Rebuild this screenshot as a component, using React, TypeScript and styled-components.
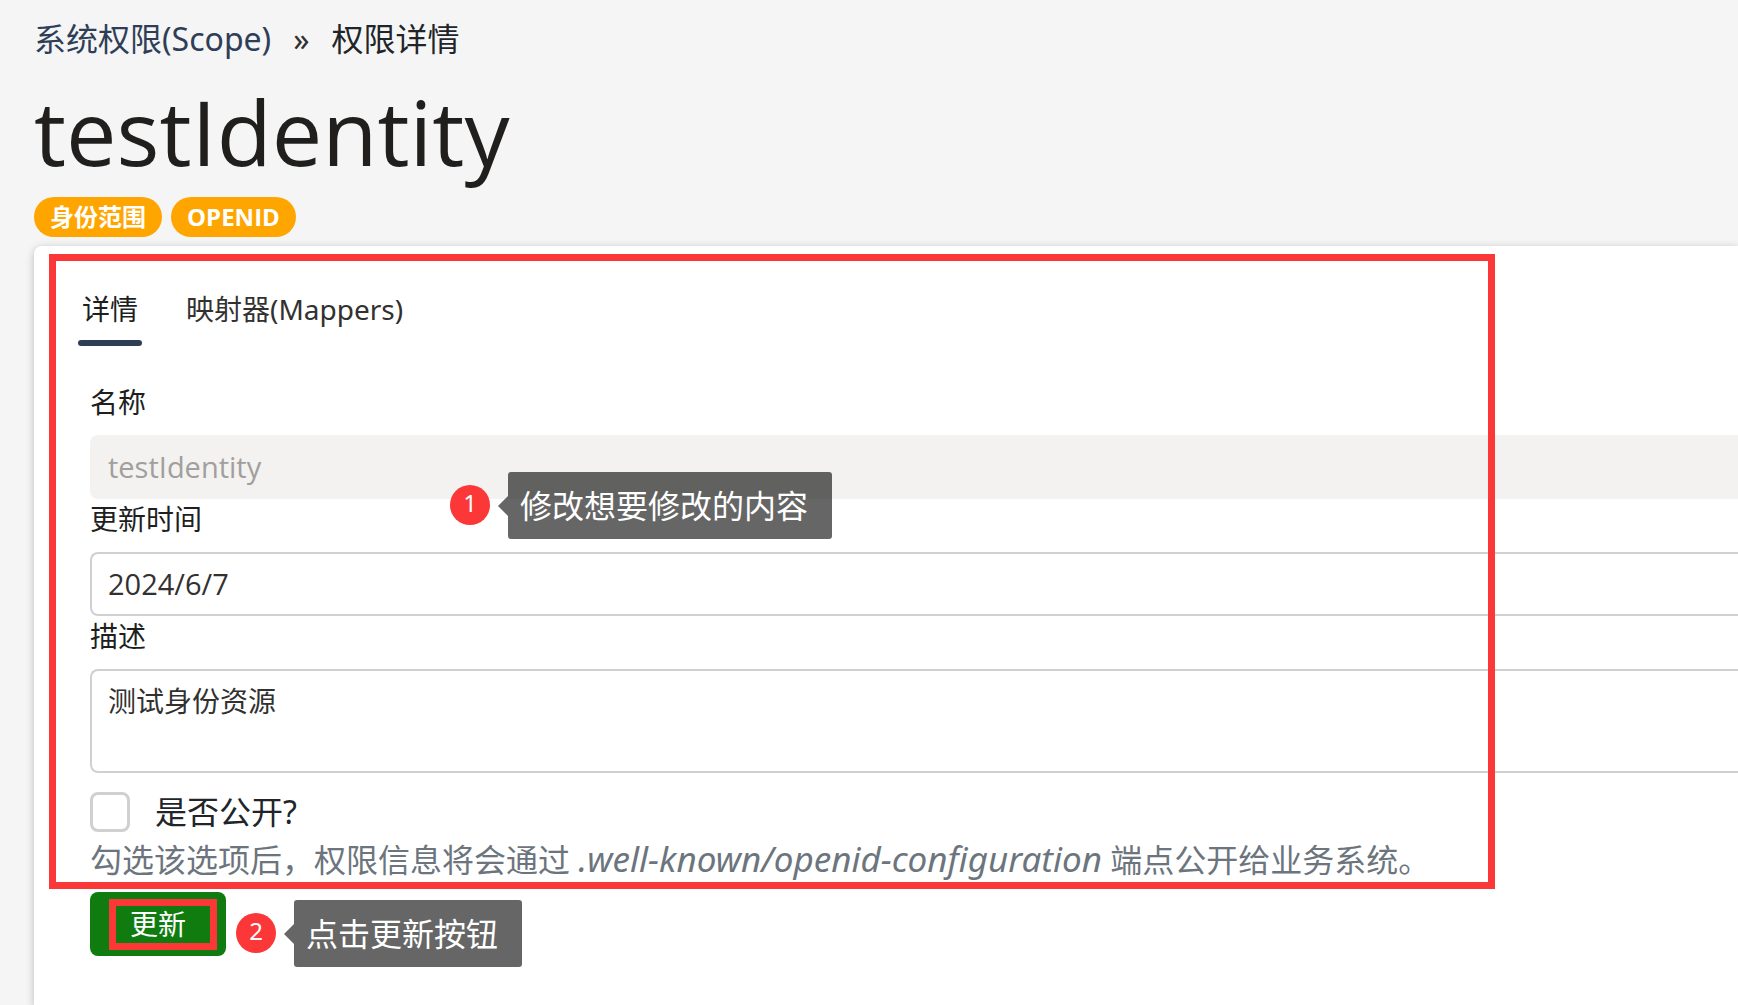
import React, { useState } from "react";
import styled, { createGlobalStyle } from "styled-components";

const GlobalStyle = createGlobalStyle`
  *, *::before, *::after { box-sizing: border-box; }
  body {
    margin: 0;
    background: #f5f5f5;
    color: #212529;
    font-family: "Noto Sans", "Noto Sans CJK SC", sans-serif;
    font-size: 32px;
    line-height: 48px;
  }
  button, input, textarea { font-family: inherit; }
`;

const displayFont = `"Open Sans", "Noto Sans CJK SC", sans-serif`;

const Page = styled.div`
  display: flex;
  flex-direction: column;
  min-height: 100vh;
  padding: 15px 0 0 34px;
  overflow: hidden;
`;

const Breadcrumb = styled.nav`
  display: flex;
  gap: 22px;
`;

const CrumbLink = styled.a`
  color: #2f3e57;
  text-decoration: none;
`;

const Separator = styled.span`
  color: #323130;
`;

const Title = styled.h1`
  margin: 8px 0 0;
  color: #201f1e;
  font-family: ${displayFont};
  font-size: 90px;
  font-weight: 400;
  line-height: 120px;
`;

const Badges = styled.div`
  display: flex;
  gap: 9px;
  margin: 6px 0 9px;
`;

const Badge = styled.span`
  padding: 0 16px;
  border-radius: 20px;
  background: #ffa500;
  color: #fff;
  font-family: ${displayFont};
  font-size: 24px;
  font-weight: 700;
  line-height: 40px;
`;

const Card = styled.main`
  position: relative;
  flex: 1;
  padding: 36px 0 48px 44px;
  border-radius: 8px 0 0 0;
  background: #fff;
  box-shadow: 0 2px 8px rgba(0, 0, 0, 0.24);
`;

const Tabs = styled.div`
  display: flex;
  gap: 40px;
`;

const Tab = styled.button<{ $active: boolean }>`
  display: flex;
  flex-direction: column;
  padding: 6px 0 0;
  border: 0;
  background: none;
  color: ${(p) => (p.$active ? "#201f1e" : "#323130")};
  font-size: 28px;
  line-height: 42px;
  cursor: pointer;

  span {
    padding: 0 4px 10px;
  }

  &::after {
    content: "";
    align-self: stretch;
    height: 6px;
    border-radius: 3px;
    background: ${(p) => (p.$active ? "#2f3e57" : "transparent")};
  }
`;

const Form = styled.form`
  display: flex;
  flex-direction: column;
  padding: 36px 0 0 12px;
`;

const Field = styled.div`
  display: flex;
  flex-direction: column;
`;

const Label = styled.label`
  margin-bottom: 13px;
  color: #201f1e;
  font-size: 28px;
  line-height: 40px;
`;

const TextInput = styled.input`
  width: 100%;
  height: 64px;
  padding: 0 16px 2px;
  border: 2px solid #d0d0d0;
  border-right: 0;
  border-radius: 8px 0 0 8px;
  background: #fff;
  color: #323130;
  font-family: ${displayFont};
  font-size: 29px;

  &:disabled {
    border-color: #f3f2f0;
    background: #f3f2f0;
    color: #a19f9d;
  }
`;

const TextArea = styled.textarea`
  display: block;
  width: 100%;
  height: 104px;
  padding: 9px 16px;
  border: 2px solid #d0d0d0;
  border-right: 0;
  border-radius: 8px 0 0 8px;
  color: #323130;
  font-size: 28px;
  line-height: 42px;
  resize: none;
`;

const CheckRow = styled.div`
  display: flex;
  align-items: center;
  gap: 25px;
  margin-top: 15px;
`;

const Checkbox = styled.input`
  appearance: none;
  width: 40px;
  height: 40px;
  margin: 0;
  border: 3px solid #d2d0ce;
  border-radius: 8px;
  background: #fff;

  &:checked {
    border-color: #2f3e57;
    background: #2f3e57;
  }
`;

const Hint = styled.p`
  margin: 0;
  color: #6c757d;

  em {
    font-size: 35px;
    line-height: 40px;
  }
`;

const Actions = styled.div`
  display: flex;
  margin-top: 8px;
`;

const ButtonSlot = styled.div`
  position: relative;
`;

const SubmitButton = styled.button`
  display: block;
  height: 64px;
  padding: 0 40px;
  border: 0;
  border-radius: 8px;
  background: #107c10;
  color: #fff;
  font-size: 28px;
  line-height: 60px;
  cursor: pointer;
`;

const Outline = styled.div<{ $x: number; $y: number; $w: number; $h: number }>`
  position: absolute;
  left: ${(p) => p.$x}px;
  top: ${(p) => p.$y}px;
  width: ${(p) => p.$w}px;
  height: ${(p) => p.$h}px;
  border: 7px solid #fc3737;
  pointer-events: none;
`;

const Callout = styled.div<{ $x: number; $y: number }>`
  position: absolute;
  left: ${(p) => p.$x}px;
  top: ${(p) => p.$y}px;
  display: flex;
  align-items: center;
  white-space: nowrap;
  pointer-events: none;
`;

const StepNumber = styled.span`
  width: 40px;
  height: 40px;
  margin: 0 8px 2px 0;
  border-radius: 50%;
  background: #fc3737;
  color: #fff;
  font-size: 24px;
  line-height: 36px;
  text-align: center;
`;

const Arrow = styled.span`
  border: 10px solid transparent;
  border-left: 0;
  border-right-color: rgba(0, 0, 0, 0.6);
`;

const Bubble = styled.span`
  padding: 10px 24px 9px 12px;
  border-radius: 3px;
  background: rgba(0, 0, 0, 0.6);
  color: #fff;
`;

function Step({ n, x, y, text }: { n: number; x: number; y: number; text: string }) {
  return (
    <Callout $x={x} $y={y}>
      <StepNumber>{n}</StepNumber>
      <Arrow />
      <Bubble>{text}</Bubble>
    </Callout>
  );
}

const TABS = ["详情", "映射器(Mappers)"];

export default function App() {
  const [tab, setTab] = useState(0);
  const [updated, setUpdated] = useState("2024/6/7");
  const [description, setDescription] = useState("测试身份资源");
  const [isPublic, setIsPublic] = useState(false);

  return (
    <>
      <GlobalStyle />
      <Page>
        <Breadcrumb>
          <CrumbLink href="#scopes">系统权限(Scope)</CrumbLink>
          <Separator>»</Separator>
          <span>权限详情</span>
        </Breadcrumb>
        <Title>testIdentity</Title>
        <Badges>
          <Badge>身份范围</Badge>
          <Badge>OPENID</Badge>
        </Badges>
        <Card>
          <Tabs role="tablist">
            {TABS.map((name, i) => (
              <Tab
                key={name}
                type="button"
                role="tab"
                aria-selected={tab === i}
                $active={tab === i}
                onClick={() => setTab(i)}
              >
                <span>{name}</span>
              </Tab>
            ))}
          </Tabs>
          <Form onSubmit={(e) => e.preventDefault()}>
            <Field>
              <Label htmlFor="name">名称</Label>
              <TextInput id="name" value="testIdentity" disabled readOnly />
            </Field>
            <Field>
              <Label htmlFor="updated">更新时间</Label>
              <TextInput id="updated" value={updated} onChange={(e) => setUpdated(e.target.value)} />
            </Field>
            <Field>
              <Label htmlFor="description">描述</Label>
              <TextArea
                id="description"
                value={description}
                onChange={(e) => setDescription(e.target.value)}
              />
            </Field>
            <CheckRow>
              <Checkbox
                id="public"
                type="checkbox"
                checked={isPublic}
                onChange={(e) => setIsPublic(e.target.checked)}
              />
              <label htmlFor="public">是否公开?</label>
            </CheckRow>
            <Hint>
              勾选该选项后，权限信息将会通过 <em>.well-known/openid-configuration</em> 端点公开给业务系统。
            </Hint>
            <Actions>
              <ButtonSlot>
                <SubmitButton type="submit">更新</SubmitButton>
                <Outline $x={19} $y={7} $w={108} $h={51} />
                <Step n={2} x={146} y={8} text="点击更新按钮" />
              </ButtonSlot>
            </Actions>
          </Form>
          <Outline $x={15} $y={8} $w={1446} $h={635} />
          <Step n={1} x={416} y={226} text="修改想要修改的内容" />
        </Card>
      </Page>
    </>
  );
}
